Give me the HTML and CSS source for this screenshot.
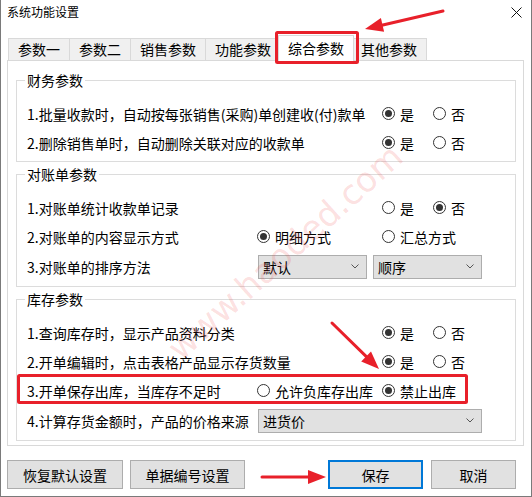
FILE: index.html
```html
<!DOCTYPE html>
<html lang="zh-CN">
<head>
<meta charset="utf-8">
<title>系统功能设置</title>
<link rel="stylesheet" href="styles.css">
</head>
<body>
<div class="window">
  <div class="titlebar">
    <span class="title">系统功能设置</span>
    <svg class="close" width="11" height="11" viewBox="0 0 11 11"><path d="M0.5 0.5L10.5 10.5M10.5 0.5L0.5 10.5" stroke="#111" stroke-width="1" fill="none"/></svg>
  </div>
  <div class="tabs">
    <div class="tab">参数一</div>
    <div class="tab">参数二</div>
    <div class="tab">销售参数</div>
    <div class="tab">功能参数</div>
    <div class="tab active">综合参数</div>
    <div class="tab">其他参数</div>
  </div>
  <div class="panel">
    <fieldset class="group">
      <legend>财务参数</legend>
      <div class="row">
        <span class="label wide">1.批量收款时，自动按每张销售(采购)单创建收(付)款单</span>
        <span class="opt c3"><span class="radio on"></span>是</span>
        <span class="opt c4"><span class="radio"></span>否</span>
      </div>
      <div class="row">
        <span class="label wide">2.删除销售单时，自动删除关联对应的收款单</span>
        <span class="opt c3"><span class="radio on"></span>是</span>
        <span class="opt c4"><span class="radio"></span>否</span>
      </div>
    </fieldset>
    <fieldset class="group">
      <legend>对账单参数</legend>
      <div class="row">
        <span class="label wide">1.对账单统计收款单记录</span>
        <span class="opt c3"><span class="radio"></span>是</span>
        <span class="opt c4"><span class="radio on"></span>否</span>
      </div>
      <div class="row">
        <span class="label">2.对账单的内容显示方式</span>
        <span class="opt c2"><span class="radio on"></span>明细方式</span>
        <span class="opt c3"><span class="radio"></span>汇总方式</span>
      </div>
      <div class="row tall">
        <span class="label">3.对账单的排序方法</span>
        <div class="sel-pair">
          <div class="select"><span>默认</span><svg width="8" height="5" viewBox="0 0 8 5"><path d="M0.5 0.5L4 4L7.5 0.5" stroke="#555" fill="none"/></svg></div>
          <div class="select"><span>顺序</span><svg width="8" height="5" viewBox="0 0 8 5"><path d="M0.5 0.5L4 4L7.5 0.5" stroke="#555" fill="none"/></svg></div>
        </div>
      </div>
    </fieldset>
    <fieldset class="group">
      <legend>库存参数</legend>
      <div class="row">
        <span class="label wide">1.查询库存时，显示产品资料分类</span>
        <span class="opt c3"><span class="radio on"></span>是</span>
        <span class="opt c4"><span class="radio"></span>否</span>
      </div>
      <div class="row">
        <span class="label wide">2.开单编辑时，点击表格产品显示存货数量</span>
        <span class="opt c3"><span class="radio on"></span>是</span>
        <span class="opt c4"><span class="radio"></span>否</span>
      </div>
      <div class="row">
        <span class="label">3.开单保存出库，当库存不足时</span>
        <span class="opt c2"><span class="radio"></span>允许负库存出库</span>
        <span class="opt c3"><span class="radio on"></span>禁止出库</span>
      </div>
      <div class="row tall">
        <span class="label">4.计算存货金额时，产品的价格来源</span>
        <div class="sel-pair">
          <div class="select wide"><span>进货价</span><svg width="8" height="5" viewBox="0 0 8 5"><path d="M0.5 0.5L4 4L7.5 0.5" stroke="#555" fill="none"/></svg></div>
        </div>
      </div>
    </fieldset>
  </div>
  <div class="buttons">
    <div class="btn w1">恢复默认设置</div>
    <div class="btn w2">单据编号设置</div>
    <div class="btn save">保存</div>
    <div class="btn cancel">取消</div>
  </div>
</div>
<div class="watermark">www.haoded.com</div>
<svg class="annot" width="532" height="497" viewBox="0 0 532 497">
  <g stroke="#e8202a" stroke-width="3" fill="none" stroke-linecap="round">
    <rect x="276.5" y="32.5" width="81" height="30" rx="1"/>
    <rect x="18.5" y="375.5" width="448" height="27" rx="1"/>
    <line x1="443" y1="11" x2="378.6" y2="26"/>
    <line x1="332" y1="323" x2="369.7" y2="359.9"/>
    <line x1="262" y1="477" x2="313" y2="477"/>
  </g>
  <g fill="#e8202a">
    <polygon points="365,29 384.1,31.8 380.9,18.1"/>
    <polygon points="379,369 361.2,361.4 371,351.4"/>
    <polygon points="326,477 308,470 308,484"/>
  </g>
</svg>
</body>
</html>
```

FILE: styles.css
```css
* { box-sizing: border-box; }
html, body { margin: 0; padding: 0; }
body {
  width: 532px;
  height: 497px;
  overflow: hidden;
  position: relative;
  background: #fff;
  color: #000;
  font-family: "Noto Sans CJK SC", "Microsoft YaHei", sans-serif;
  font-size: 14px;
}
.window {
  width: 532px;
  height: 497px;
  border: 1px solid #7a7a7a;
  border-top: none;
  display: flex;
  flex-direction: column;
  background: #fff;
}
.titlebar {
  height: 24px;
  display: flex;
  align-items: center;
  justify-content: space-between;
  padding: 0 9px 0 6px;
}
.title { font-size: 12px; line-height: 24px; }
.close { display: block; }
.tabs {
  display: flex;
  align-items: flex-end;
  height: 22px;
  margin: 14px 0 0 7px;
  position: relative;
  z-index: 1;
}
.tab {
  height: 22px;
  line-height: 20px;
  padding: 0 9px;
  border: 1px solid #d9d9d9;
  border-bottom: none;
  background: #f0f0f0;
  margin-left: -1px;
  white-space: nowrap;
}
.tab:first-child { margin-left: 0; }
.tab.active {
  height: 26px;
  line-height: 24px;
  margin: 0 -2px -1px -3px;
  background: #fff;
  position: relative;
  z-index: 2;
}
.panel {
  margin: 0 7px 0 6px;
  border: 1px solid #d9d9d9;
  padding: 9px 7px 4px 8px;
  background: #fff;
}
.group {
  margin: 0;
  min-width: 0;
  border: 1px solid #dcdcdc;
  padding: 9px 8px 4px 10px;
}
.group + .group { margin-top: 2px; }
.group legend {
  padding: 0 2px;
  margin-left: -2px;
  line-height: 20px;
}
.row {
  display: grid;
  grid-template-columns: 230px 125px 51px 1fr;
  align-items: center;
  height: 29px;
}
.row.tall { height: 31px; }
.label { white-space: nowrap; line-height: 20px; grid-column: 1; }
.label.wide { grid-column: 1 / 3; }
.opt {
  display: flex;
  align-items: center;
  gap: 5px;
  white-space: nowrap;
  line-height: 20px;
}
.c2 { grid-column: 2; }
.c3 { grid-column: 3; }
.c4 { grid-column: 4; }
.radio {
  flex: none;
  width: 13px;
  height: 13px;
  border: 1px solid #333;
  border-radius: 50%;
  background: #fff;
  display: inline-flex;
  align-items: center;
  justify-content: center;
}
.radio.on::after {
  content: "";
  width: 7px;
  height: 7px;
  border-radius: 50%;
  background: #333;
}
.sel-pair {
  grid-column: 2 / 5;
  display: flex;
  gap: 6px;
  padding-left: 1px;
}
.select {
  width: 109px;
  height: 24px;
  border: 1px solid #adadad;
  background: #e1e1e1;
  display: flex;
  align-items: center;
  justify-content: space-between;
  padding: 0 7px 0 4px;
  line-height: 20px;
}
.select.wide { width: 224px; }
.buttons {
  display: flex;
  gap: 7px;
  margin-top: 14px;
  padding: 0 15px 0 6px;
}
.btn {
  height: 29px;
  border: 1px solid #adadad;
  background: #e1e1e1;
  display: flex;
  align-items: center;
  justify-content: center;
  line-height: 20px;
  white-space: nowrap;
}
.w1 { width: 116px; }
.w2 { width: 115px; }
.save {
  width: 95px;
  margin-left: auto;
  border: 2px solid #0078d7;
}
.cancel { width: 85px; margin-left: 1px; }
.watermark {
  position: absolute;
  left: 285px;
  top: 252px;
  transform: translate(-50%, -50%) rotate(-42deg);
  font-family: "DejaVu Sans", sans-serif;
  font-size: 34px;
  color: rgba(240, 70, 70, 0.18);
  white-space: nowrap;
  pointer-events: none;
  z-index: 5;
}
.annot {
  position: absolute;
  left: 0;
  top: 0;
  z-index: 10;
  pointer-events: none;
}
```
